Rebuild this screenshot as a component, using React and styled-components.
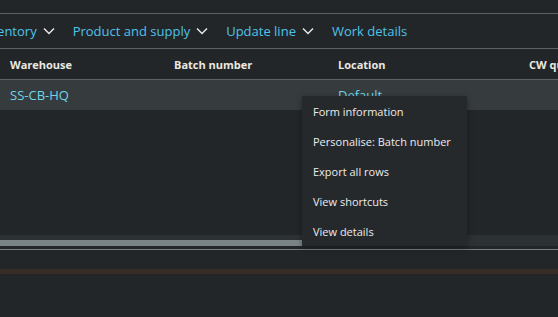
import React from 'react'
import styled, { createGlobalStyle } from 'styled-components'

const BG = '#232629'
const LINE = '#5d6165'
const LINK = '#4ec3ea'

const Global = createGlobalStyle`
  html, body {
    margin: 0;
    padding: 0;
    background: ${BG};
  }
  body {
    font-family: 'Open Sans', 'Noto Sans', sans-serif;
  }
`

const Page = styled.div`
  position: relative;
  width: 558px;
  height: 317px;
  overflow: hidden;
  background: ${BG};
`

const TopGap = styled.div`
  height: 13px;
  border-bottom: 1px solid ${LINE};
`

const Toolbar = styled.div`
  display: flex;
  align-items: center;
  gap: 18px;
  height: 34px;
  border-bottom: 1px solid ${LINE};
  white-space: nowrap;
  overflow: hidden;
`

const ToolItem = styled.span`
  display: inline-flex;
  align-items: center;
  gap: 6px;
  color: ${LINK};
  font-size: 13px;
  margin-left: ${(p) => p.$shift || 0}px;
`

const Chevron = () => (
  <svg width="12" height="8" viewBox="0 0 12 8">
    <polyline points="1,1.5 6,6.5 11,1.5" fill="none" stroke="#e6e6e6" strokeWidth="1.5" />
  </svg>
)

const Row = styled.div`
  display: grid;
  grid-template-columns: 164px 164px 191px 1fr;
  align-items: center;
  padding-left: 10px;
  height: 30px;
  white-space: nowrap;
  overflow: hidden;
  background: ${(p) => (p.$selected ? '#363b3e' : 'transparent')};
  border-bottom: ${(p) => (p.$header ? `1px solid ${LINE}` : 'none')};
`

const HeadCell = styled.span`
  color: #ebe8e1;
  font-size: 11px;
  font-weight: 700;
`

const Cell = styled.span`
  color: #6fd6e6;
  font-size: 13px;
`

const Body = styled.div`
  height: 125px;
`

const ScrollTrack = styled.div`
  height: 11px;
  background: #2c3134;
  display: flex;
  align-items: flex-end;
`

const ScrollThumb = styled.div`
  width: 302px;
  height: 6px;
  background: #7a8487;
`

const Divider = styled.div`
  margin-top: 3px;
  height: 1px;
  background: #777c7f;
`

const Band = styled.div`
  margin-top: 19px;
  height: 5px;
  background: #382c26;
`

const Menu = styled.div`
  position: absolute;
  left: 302px;
  top: 96px;
  width: 165px;
  background: #26292c;
  box-shadow: 0 2px 6px rgba(0, 0, 0, 0.35);
  display: flex;
  flex-direction: column;
`

const MenuItem = styled.div`
  height: 30px;
  display: flex;
  align-items: center;
  padding-left: 11px;
  color: #ececec;
  font-size: 11px;
  white-space: nowrap;
`

const tools = [
  { label: 'Inventory', chevron: true, shift: -21 },
  { label: 'Product and supply', chevron: true },
  { label: 'Update line', chevron: true },
  { label: 'Work details' },
]

const menu = ['Form information', 'Personalise: Batch number', 'Export all rows', 'View shortcuts', 'View details']

export default function App() {
  return (
    <Page>
      <Global />
      <TopGap />
      <Toolbar>
        {tools.map((t) => (
          <ToolItem key={t.label} $shift={t.shift}>
            {t.label}
            {t.chevron && <Chevron />}
          </ToolItem>
        ))}
      </Toolbar>
      <Row $header>
        <HeadCell>Warehouse</HeadCell>
        <HeadCell>Batch number</HeadCell>
        <HeadCell>Location</HeadCell>
        <HeadCell>CW quantity</HeadCell>
      </Row>
      <Row $selected>
        <Cell>SS-CB-HQ</Cell>
        <Cell />
        <Cell>Default</Cell>
        <Cell />
      </Row>
      <Body />
      <ScrollTrack>
        <ScrollThumb />
      </ScrollTrack>
      <Divider />
      <Band />
      <Menu>
        {menu.map((m) => (
          <MenuItem key={m}>{m}</MenuItem>
        ))}
      </Menu>
    </Page>
  )
}
